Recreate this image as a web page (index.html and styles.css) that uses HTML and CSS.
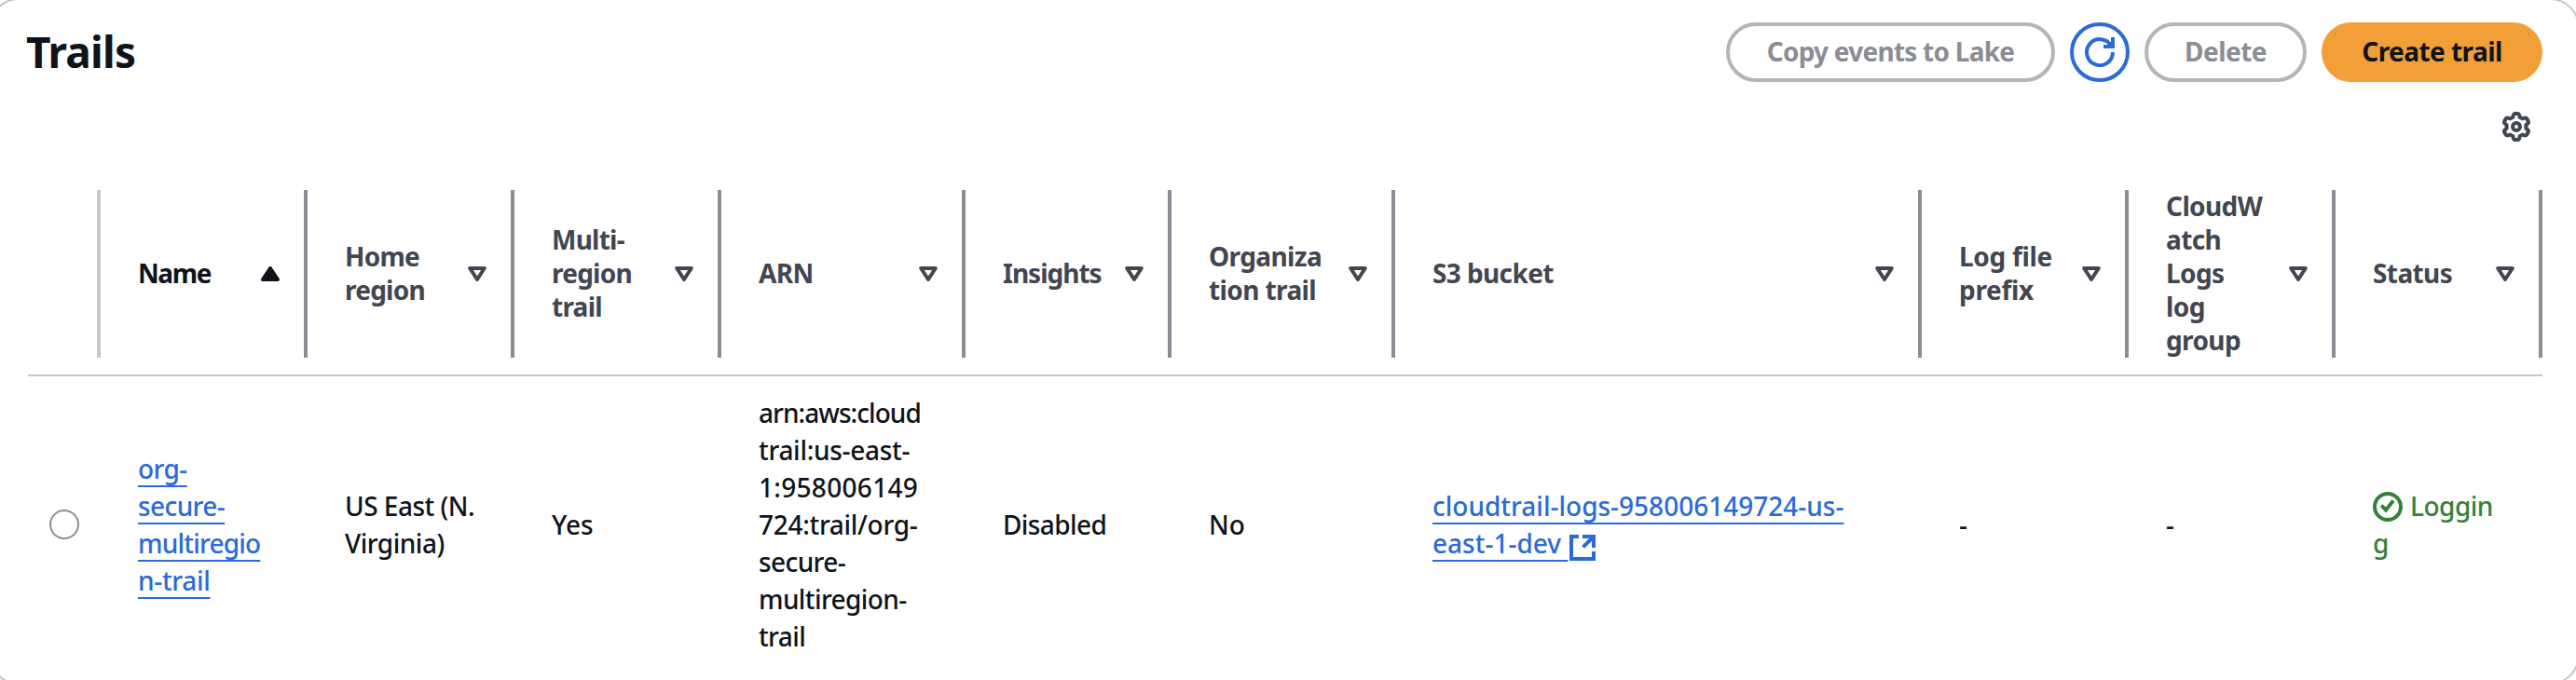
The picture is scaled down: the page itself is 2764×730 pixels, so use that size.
FILE: index.html
```
<!DOCTYPE html>
<html lang="en">
<head>
<meta charset="utf-8">
<title>Trails</title>
<link rel="stylesheet" href="styles.css">
</head>
<body>
<svg class="sprite" aria-hidden="true">
  <symbol id="sort-down" viewBox="0 0 20 16"><path d="M2.2 2h15.6L10 14z" fill="none" stroke="currentColor" stroke-width="4" stroke-linejoin="round"/></symbol>
  <symbol id="sort-up" viewBox="0 0 20 16"><path d="M10 2L2 14h16z" fill="currentColor" stroke="currentColor" stroke-width="4" stroke-linejoin="round"/></symbol>
</svg>
<main class="panel">
  <header class="panel-header">
    <h1 class="title">Trails</h1>
    <div class="actions">
      <button class="btn btn-copy" disabled>Copy events to Lake</button>
      <button class="btn btn-icon" aria-label="Refresh">
        <svg class="icon" viewBox="0 0 16 16"><path d="M15 8a7 7 0 1 1-.8-3.2M10 5h5V0"/></svg>
      </button>
      <button class="btn btn-delete" disabled>Delete</button>
      <button class="btn btn-primary">Create trail</button>
    </div>
  </header>
  <div class="preferences">
    <svg class="icon" viewBox="0 0 16 16"><path d="M6.4 1.9Q6.6 1 7.4 1H8.6Q9.4 1 9.6 1.9L9.9 3Q10.6 3.3 11.2 3.7L12.5 3.3Q13.2 3.1 13.6 3.7L14.4 5.1Q14.7 5.8 14.1 6.3L13.2 7.2V8.8L14.1 9.7Q14.7 10.2 14.4 10.9L13.6 12.3Q13.2 12.9 12.5 12.7L11.2 12.3Q10.6 12.7 9.9 13L9.6 14.1Q9.4 15 8.6 15H7.4Q6.6 15 6.4 14.1L6.1 13Q5.4 12.7 4.8 12.3L3.5 12.7Q2.8 12.9 2.4 12.3L1.6 10.9Q1.3 10.2 1.9 9.7L2.8 8.8V7.2L1.9 6.3Q1.3 5.8 1.6 5.1L2.4 3.7Q2.8 3.1 3.5 3.3L4.8 3.7Q5.4 3.3 6.1 3z"/><circle cx="8" cy="8" r="2"/></svg>
  </div>
  <div class="row head">
    <div class="th th-select"></div>
    <div class="th th-sorted"><span class="t-name">Name</span><svg class="sort"><use href="#sort-up"/></svg></div>
    <div class="th"><span class="t-home">Home<br>region</span><svg class="sort"><use href="#sort-down"/></svg></div>
    <div class="th"><span class="t-home">Multi-<br>region<br>trail</span><svg class="sort"><use href="#sort-down"/></svg></div>
    <div class="th"><span>ARN</span><svg class="sort"><use href="#sort-down"/></svg></div>
    <div class="th"><span class="t-insights">Insights</span><svg class="sort"><use href="#sort-down"/></svg></div>
    <div class="th"><span>Organiza<br>tion trail</span><svg class="sort"><use href="#sort-down"/></svg></div>
    <div class="th"><span>S3 bucket</span><svg class="sort"><use href="#sort-down"/></svg></div>
    <div class="th"><span class="t-prefix">Log file<br>prefix</span><svg class="sort"><use href="#sort-down"/></svg></div>
    <div class="th"><span>CloudW<br>atch<br>Logs<br>log<br>group</span><svg class="sort"><use href="#sort-down"/></svg></div>
    <div class="th"><span>Status</span><svg class="sort"><use href="#sort-down"/></svg></div>
  </div>
  <div class="row">
    <div class="td-select"><span class="radio"></span></div>
    <div class="td"><a class="link link-name">org-<br>secure-<br><span class="name-long">multiregio</span><br><span class="name-end">n-trail</span></a></div>
    <div class="td t-region">US East (N.<br>Virginia)</div>
    <div class="td">Yes</div>
    <div class="td"><div><span class="arn-first">arn:aws:cloud</span><br><span class="arn-mid">trail:us-east-</span><br><span class="arn-digits">1:958006149</span><br><span class="arn-mid">724:trail/org-</span><br><span class="tight">secure-<br>multiregion-<br>trail</span></div></div>
    <div class="td tight">Disabled</div>
    <div class="td">No</div>
    <div class="td"><div class="bucket"><a class="link">cloudtrail-logs-958006149724-us-<br>east-1-dev&nbsp;</a><svg class="icon icon-inline icon-link" viewBox="0 0 16 16"><path d="M6 2H2v12h12v-4M8 2h6v6M14 2L8.3 7.7"/></svg></div></div>
    <div class="td">-</div>
    <div class="td">-</div>
    <div class="td status"><div><svg class="icon icon-inline" viewBox="0 0 16 16"><circle cx="8" cy="8" r="7"/><path d="M4.6 7.3L7 9.7l4-4.9"/></svg><span class="status-text">Loggin</span><br>g</div></div>
  </div>
</main>
</body>
</html>
```
FILE: styles.css
```
* { box-sizing: border-box; }
body {
  margin: 0;
  height: 730px;
  overflow: hidden;
  background: #fff;
  color: #0f141a;
  font: 500 28px/40px "Noto Sans", "Open Sans", sans-serif;
}
.sprite { display: none; }
.panel {
  width: 2780px;
  height: 737px;
  margin: -2px 0 0 -12px;
  padding: 24px 38px 0;
  border: 2px solid #c6c6cd;
  border-radius: 32px;
}
.panel-header {
  display: flex;
  justify-content: space-between;
  height: 64px;
}
.title {
  margin: 1px 0 0;
  font-size: 46px;
  font-weight: 700;
  line-height: 60px;
  letter-spacing: -0.8px;
}
.actions { display: flex; gap: 16px; }
.btn {
  height: 64px;
  padding: 0 0 2px;
  border: 4px solid #b4b4bb;
  border-radius: 32px;
  background: #fff;
  color: #8c8c94;
  font: 700 28px/40px "Noto Sans", "Open Sans", sans-serif;
}
.btn-copy { width: 353px; letter-spacing: -0.76px; }
.btn-icon {
  display: grid;
  place-items: center;
  width: 64px;
  padding: 0;
  border-color: #2b6ada;
  color: #2b6ada;
}
.btn-delete { width: 174px; letter-spacing: -0.5px; }
.btn-primary { width: 237px; border-color: #f29f38; background: #f29f38; color: #0f141a; letter-spacing: -0.55px; }
.icon {
  display: block;
  width: 32px;
  height: 32px;
  fill: none;
  stroke: currentColor;
  stroke-width: 2;
}
.preferences {
  display: flex;
  justify-content: flex-end;
  height: 116px;
  padding: 32px 12px 0;
  color: #424650;
}
.row {
  display: grid;
  grid-template-columns: 78px 222px 222px 222px 262px 221px 240px 565px 222px 222px 222px;
  height: 318px;
  margin-left: 2px;
}
.head {
  height: 200px;
  padding-bottom: 18px;
  border-bottom: 2px solid #c6c6cd;
}
.th {
  display: flex;
  align-items: center;
  justify-content: space-between;
  height: 180px;
  padding: 0 26px 0 40px;
  border-right: 4px solid #8c8c94;
  color: #424650;
  font-weight: 700;
  line-height: 36px;
  letter-spacing: -0.6px;
}
.th > span { margin-top: -2px; }
.th-select { border-right-color: #c6c6cd; padding: 0; }
.th-sorted { color: #0f141a; }
.t-name { letter-spacing: -1.4px; }
.t-home { letter-spacing: -0.75px; }
.t-insights { letter-spacing: -1px; }
.t-prefix { letter-spacing: -0.3px; }
.sort { flex: none; width: 20px; height: 16px; }
.td {
  display: flex;
  align-items: center;
  padding: 0 0 1px 40px;
  white-space: nowrap;
}
.td-select { display: flex; align-items: center; padding-left: 23px; }
.radio {
  width: 32px;
  height: 32px;
  border: 2px solid #8c8c94;
  border-radius: 50%;
}
.tight { letter-spacing: -0.6px; }
.t-region { letter-spacing: -0.5px; }
.arn-first { letter-spacing: -0.95px; }
.arn-mid { letter-spacing: -0.3px; }
.arn-digits { letter-spacing: 0.3px; }
.link {
  color: #2b6ada;
  text-decoration: underline;
  text-decoration-thickness: 2px;
  text-decoration-skip-ink: none;
  text-underline-offset: 7px;
}
.link-name { letter-spacing: -0.6px; }
.name-long { letter-spacing: -0.8px; }
.name-end { letter-spacing: -0.3px; }
.bucket { color: #2b6ada; }
.icon-inline { display: inline-block; vertical-align: -6px; }
.icon-link { margin: -4px 0; }
.status { color: #36803a; }
.status-text { margin-left: 8px; letter-spacing: -0.5px; }
```
